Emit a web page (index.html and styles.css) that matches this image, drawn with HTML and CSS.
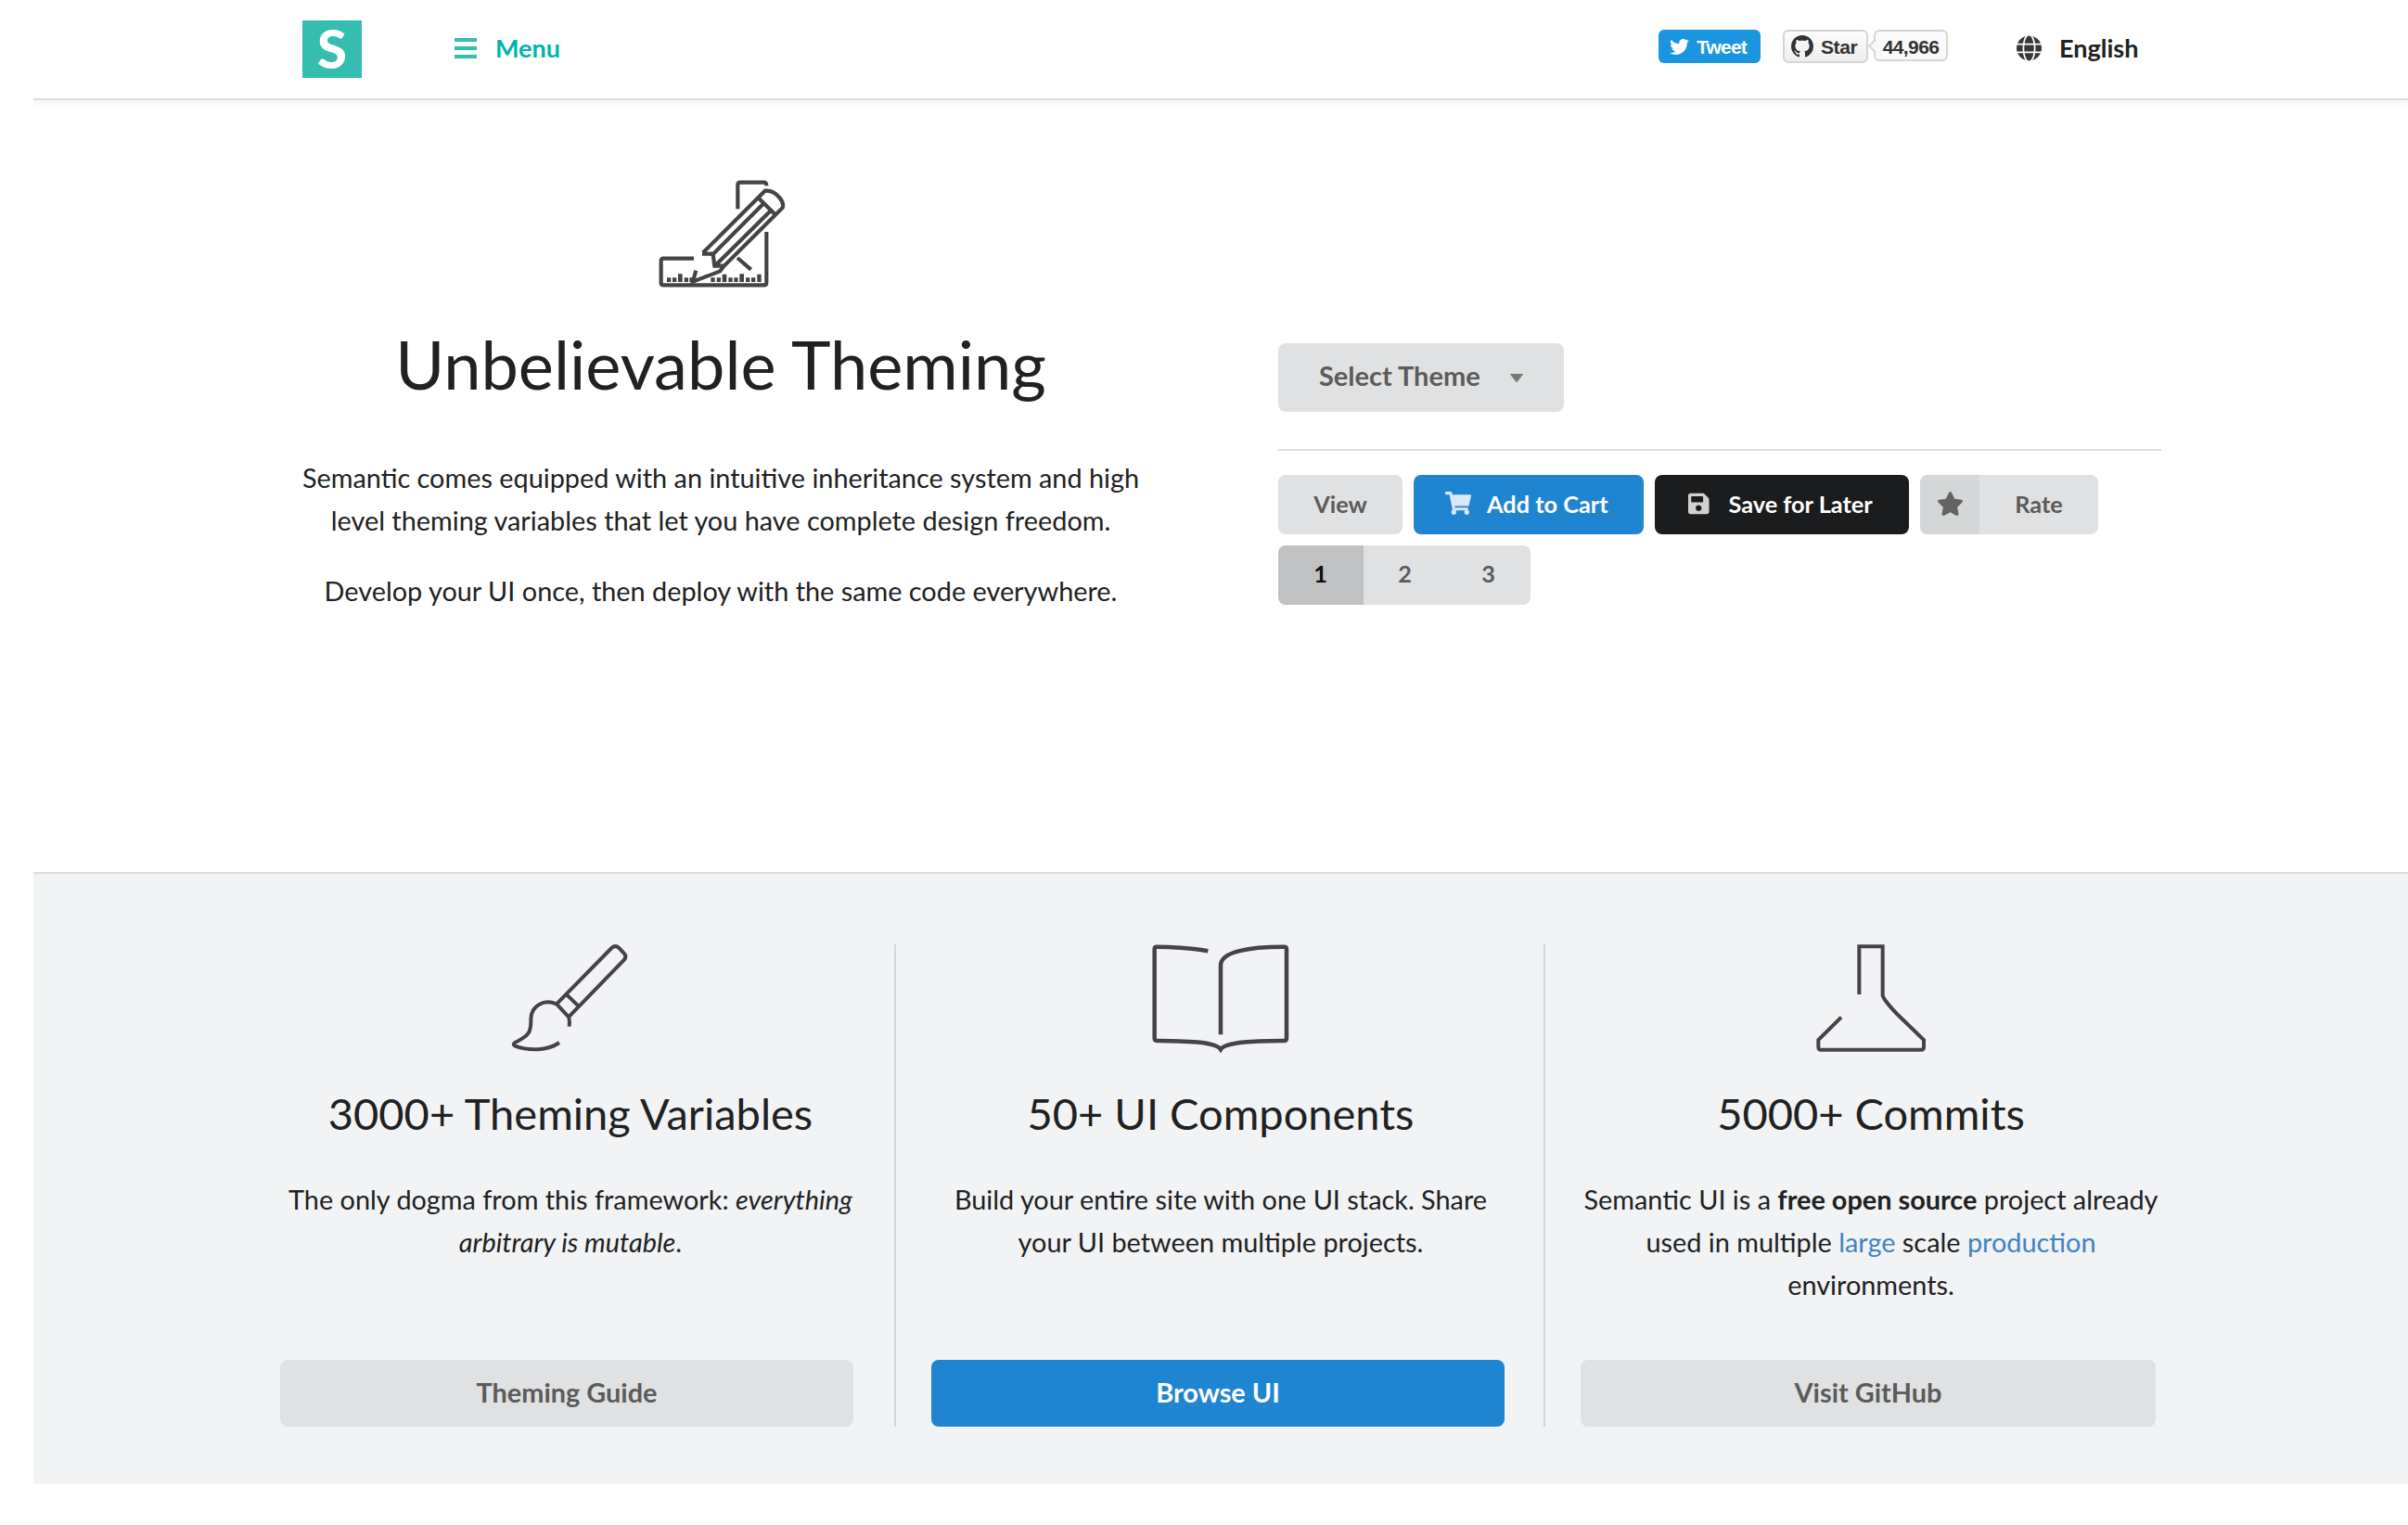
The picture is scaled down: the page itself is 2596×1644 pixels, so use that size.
FILE: index.html
```html
<!DOCTYPE html>
<html lang="en">
<head>
<meta charset="utf-8">
<title>Semantic UI</title>
<link rel="stylesheet" href="styles.css">
</head>
<body>
<header class="topbar">
  <a class="logo">S</a>
  <a class="menu-link">
    <svg class="bars" viewBox="0 0 24 22"><path d="M0 0h24v4H0zM0 9h24v4H0zM0 18h24v4H0z" fill="currentColor"/></svg>
    <span>Menu</span>
  </a>
  <div class="social">
    <a class="tweet">
      <svg viewBox="0 48 512 416" width="21" height="17"><path fill="#fff" d="M459.37 151.716c.325 4.548.325 9.097.325 13.645 0 138.72-105.583 298.558-298.558 298.558-59.452 0-114.68-17.219-161.137-47.106 8.447.974 16.568 1.299 25.34 1.299 49.055 0 94.213-16.568 130.274-44.832-46.132-.975-84.792-31.188-98.112-72.772 6.498.974 12.995 1.624 19.818 1.624 9.421 0 18.843-1.3 27.614-3.573-48.081-9.747-84.143-51.98-84.143-102.985v-1.299c13.969 7.797 30.214 12.67 47.431 13.319-28.264-18.843-46.781-51.005-46.781-87.391 0-19.492 5.197-37.36 14.294-52.954 51.655 63.675 129.3 105.258 216.365 109.807-1.624-7.797-2.599-15.918-2.599-24.04 0-57.828 46.782-104.934 104.934-104.934 30.213 0 57.502 12.67 76.67 33.137 23.715-4.548 46.456-13.32 66.599-25.34-7.798 24.366-24.366 44.833-46.132 57.827 21.117-2.273 41.584-8.122 60.426-16.243-14.292 20.791-32.161 39.308-52.628 54.253z"/></svg>
      <span>Tweet</span>
    </a>
    <a class="star">
      <svg viewBox="0 0 16 16" width="24" height="24"><path fill="#333" d="M8 0C3.58 0 0 3.58 0 8c0 3.54 2.29 6.53 5.47 7.59.4.07.55-.17.55-.38 0-.19-.01-.82-.01-1.49-2.01.37-2.53-.49-2.69-.94-.09-.23-.48-.94-.82-1.13-.28-.15-.68-.52-.01-.53.63-.01 1.08.58 1.23.82.72 1.21 1.87.87 2.33.66.07-.52.28-.87.51-1.07-1.78-.2-3.64-.89-3.64-3.95 0-.87.31-1.59.82-2.15-.08-.2-.36-1.02.08-2.12 0 0 .67-.21 2.2.82.64-.18 1.32-.27 2-.27.68 0 1.36.09 2 .27 1.53-1.04 2.2-.82 2.2-.82.44 1.1.16 1.92.08 2.12.51.56.82 1.27.82 2.15 0 3.07-1.87 3.75-3.65 3.95.29.25.54.73.54 1.48 0 1.07-.01 1.93-.01 2.2 0 .21.15.46.55.38A8.013 8.013 0 0 0 16 8c0-4.42-3.58-8-8-8z"/></svg>
      <span>Star</span>
    </a>
    <a class="count">44,966</a>
  </div>
  <a class="language">
    <svg viewBox="0 0 496 512" width="27" height="28"><path fill="currentColor" d="M336.5 160C322 70.7 287.8 8 248 8s-74 62.7-88.5 152h177zM152 256c0 22.2 1.2 43.5 3.3 64h185.3c2.1-20.5 3.3-41.8 3.3-64s-1.2-43.5-3.3-64H155.3c-2.1 20.5-3.3 41.8-3.3 64zm324.7-96c-28.6-67.9-86.5-120.4-158-141.6 24.4 33.8 41.2 84.7 50 141.6h108zM177.2 18.4C105.8 39.6 47.8 92.1 19.3 160h108c8.7-56.9 25.5-107.8 49.9-141.6zM487.4 192H372.7c2.1 21 3.3 42.5 3.3 64s-1.2 43-3.3 64h114.6c5.5-20.5 8.6-41.8 8.6-64s-3.1-43.5-8.5-64zM120 256c0-21.5 1.2-43 3.3-64H8.6C3.2 212.5 0 233.8 0 256s3.2 43.5 8.6 64h114.6c-2-21-3.2-42.5-3.2-64zm39.5 96c14.5 89.3 48.7 152 88.5 152s74-62.7 88.5-152h-177zm159.3 141.6c71.4-21.2 129.4-73.7 158-141.6h-108c-8.8 56.9-25.6 107.8-50 141.6zM19.3 352c28.6 67.9 86.5 120.4 158 141.6-24.4-33.8-41.2-84.7-50-141.6h-108z"/></svg>
    <span>English</span>
  </a>
</header>

<section class="hero">
  <div class="intro">
    <svg class="hero-icon" viewBox="-9 0 600 480" fill="none" stroke="#444446" stroke-width="12.500">
      <path d="M346 166V88q0-8 8-8h77q8 0 8 11M439 240v164q0 8-8 8H106q-8 0-8-8V334q0-8 8-8h98"/>
      <path d="M234 307L434 107q27-3 47 22q15 17 10 33L300 352L289 367L201 401L211 365M411 128L470 187M430 148L264 314M453 171L270 352M231 311H266L271 350H300M345 324L389 362"/>
      <path stroke="none" fill="#444446" d="M117 388h13v14h-13zM135 388h13v14h-13zM153 376h14v26h-14zM173 388h13v14h-13zM190 388h14v14h-14zM259 388h13v14h-13zM278 388h13v14h-13zM296 377h14v25h-14zM316 388h13v14h-13zM334 388h13v14h-13zM352 376h14v26h-14zM372 388h13v14h-13zM390 388h13v14h-13zM409 377h13v25h-13z"/>
    </svg>
    <h1>Unbelievable Theming</h1>
    <p>Semantic comes equipped with an intuitive inheritance system and high level theming variables that let you have complete design freedom.</p>
    <p>Develop your UI once, then deploy with the same code everywhere.</p>
  </div>
  <div class="demo">
    <button class="btn select">Select Theme<svg viewBox="0 0 14 9" width="14" height="9"><path d="M0 .5Q0 0 1 0h12q1 0 1 .5L8 8.200q-1 1-2 0z" fill="#767778"/></svg></button>
    <div class="rule"></div>
    <div class="row">
      <button class="btn view">View</button>
      <button class="btn blue cart"><svg viewBox="0 0 576 512" width="28" height="25"><path fill="#d9e8f6" d="M528.12 301.319l47.273-208C578.806 78.301 567.391 64 551.99 64H159.208l-9.166-44.81C147.758 8.021 137.93 0 126.529 0H24C10.745 0 0 10.745 0 24v16c0 13.255 10.745 24 24 24h69.883l70.248 343.435C147.325 417.1 136 435.222 136 456c0 30.928 25.072 56 56 56s56-25.072 56-56c0-15.674-6.447-29.835-16.824-40h209.647C430.447 426.165 424 440.326 424 456c0 30.928 25.072 56 56 56s56-25.072 56-56c0-22.172-12.888-41.332-31.579-50.405l5.517-24.276c3.413-15.018-8.002-29.319-23.403-29.319H218.117l-6.545-32h293.145c11.206 0 20.92-7.754 23.403-18.681z"/></svg><span>Add to Cart</span></button>
      <button class="btn black save"><svg viewBox="0 0 448 512" width="22.500" height="26"><path fill="#d1d1d2" d="M433.941 129.941l-83.882-83.882A48 48 0 0 0 316.118 32H48C21.49 32 0 53.49 0 80v352c0 26.51 21.49 48 48 48h352c26.51 0 48-21.49 48-48V163.882a48 48 0 0 0-14.059-33.941zM224 416c-35.346 0-64-28.654-64-64 0-35.346 28.654-64 64-64s64 28.654 64 64c0 35.346-28.654 64-64 64zm96-304.52V212c0 6.627-5.373 12-12 12H76c-6.627 0-12-5.373-12-12V108c0-6.627 5.373-12 12-12h228.520c3.183 0 6.235 1.264 8.485 3.515l3.480 3.480A11.996 11.996 0 0 1 320 111.480z"/></svg><span>Save for Later</span></button>
      <button class="btn rate"><span class="rate-icon"><svg viewBox="0 0 576 512" width="29" height="26"><path fill="#626363" d="M259.3 17.8L194 150.2 47.9 171.5c-26.2 3.8-36.7 36.1-17.7 54.6l105.7 103-25 145.5c-4.5 26.3 23.2 46 46.4 33.7L288 439.6l130.7 68.7c23.2 12.2 50.9-7.4 46.4-33.7l-25-145.5 105.7-103c19-18.5 8.5-50.8-17.7-54.6L382 150.2 316.7 17.8c-11.7-23.6-45.6-23.9-57.4 0z"/></svg></span><span class="rate-label">Rate</span></button>
    </div>
    <div class="pager">
      <button class="page active">1</button><button class="page">2</button><button class="page">3</button>
    </div>
  </div>
</section>

<section class="features">
  <article class="feature">
    <svg viewBox="-15 54 540 396" width="180" height="132" fill="none" stroke="#444446" stroke-width="12">
      <path d="M210 247L388 66q12-11 24 0l16 17q10 10 0 22L249 289zM240 214L281 254M210 247C170 230 126 252 127 298C128 340 120 350 74 373q-6 5 2 10C120 399 180 399 219 372M249 287q4 12 2 33"/>
    </svg>
    <h3>3000+ Theming Variables</h3>
    <p>The only dogma from this framework: <em>everything arbitrary is mutable</em>.</p>
    <button class="btn wide first">Theming Guide</button>
  </article>
  <div class="divider"></div>
  <article class="feature middle">
    <svg viewBox="3 54 570 396" width="190" height="132" fill="none" stroke="#444446" stroke-width="13.500">
      <path d="M247 76Q180 63 81 62.500q-7 0-7 7V358q0 8 8 8C160 367 270 367 288 394C306 367 420 367 494 366q7 0 7-8V70q0-7.500-7-7.500C380 62 288 78 288 122V346"/>
    </svg>
    <h3>50+ UI Components</h3>
    <p>Build your entire site with one UI stack. Share your UI between multiple projects.</p>
    <button class="btn blue wide">Browse UI</button>
  </article>
  <div class="divider"></div>
  <article class="feature">
    <svg viewBox="6 54 510 396" width="170" height="132" fill="none" stroke="#444446" stroke-width="12">
      <path d="M223 216V60.500H299V220Q304 236 345 279L432 363V386q0 9-9 9H100q-9 0-9-9V363L165 290"/>
    </svg>
    <h3>5000+ Commits</h3>
    <p>Semantic UI is a <b>free open source</b> project already used in multiple <a>large</a> scale <a>production</a> environments.</p>
    <button class="btn wide">Visit GitHub</button>
  </article>
</section>
</body>
</html>
```
FILE: styles.css
```css
* { box-sizing: border-box; }
body {
  margin: 0;
  background: #fff;
  color: #212121;
  font: 28.85px/46px Lato, sans-serif;
}
svg { display: block; flex: none; }
h1, h3, p { margin: 0; font-weight: 400; }

.topbar {
  display: flex;
  align-items: center;
  height: 108px;
  margin-left: 36px;
  padding-left: 290px;
  border-bottom: 2px solid #dcdcdd;
  box-shadow: 0 2px 8px rgba(0, 0, 0, .06);
  clip-path: inset(0 0 -12px 0);
  font-size: 27px;
  font-weight: 700;
  white-space: nowrap;
}
.logo {
  width: 64px;
  height: 62px;
  background: #35bdb2;
  color: #fff;
  font-size: 58px;
  font-weight: 900;
  line-height: 60px;
  text-align: center;
}
.menu-link {
  display: flex;
  align-items: center;
  gap: 20px;
  margin: 0 0 3px 100px;
  width: 1298px;
  color: #00b5ad;
}
.bars { width: 24px; height: 22px; margin-top: 1px; color: #35bdb2; }
.social {
  display: flex;
  align-items: flex-start;
  height: 36px;
  margin-bottom: 6px;
  font: 700 21px/37px "Liberation Sans", Arial, sans-serif;
}
.tweet, .star { display: flex; align-items: center; height: 36px; }
.tweet {
  width: 110px;
  gap: 8px;
  padding-left: 12px;
  border-radius: 6px;
  background: #1b95e0;
  color: #fff;
  letter-spacing: -.8px;
}
.star {
  width: 92px;
  gap: 8px;
  margin-left: 24px;
  padding-left: 7px;
  border: 2px solid #d5d5d5;
  border-radius: 6px;
  background: linear-gradient(#fcfcfc, #eee);
  color: #333;
  letter-spacing: -.4px;
}
.count {
  position: relative;
  width: 80px;
  height: 34px;
  margin-left: 6px;
  border: 2px solid #d5d5d5;
  border-radius: 6px;
  background: #fafafa;
  color: #333;
  letter-spacing: -.6px;
  line-height: 34px;
  text-align: center;
}
.count::before {
  content: "";
  position: absolute;
  left: -6px;
  top: 10px;
  width: 9px;
  height: 9px;
  border: solid #d5d5d5;
  border-width: 0 0 2px 2px;
  background: #fafafa;
  transform: rotate(45deg);
}
.language {
  display: flex;
  align-items: center;
  gap: 19px;
  margin: 0 0 3px 74px;
}
.language svg { color: #383838; }

.hero { display: flex; height: 832px; padding: 62px 0 0 302px; }
.intro { width: 950px; text-align: center; }
.hero-icon { width: 200px; height: 160px; margin: 0 auto; }
h1 { margin: 16px 0 54px; font-size: 72.2px; line-height: 92px; }
.intro p + p { margin-top: 30px; }

.demo { width: 952px; margin: 200px 0 0 126px; }
.btn {
  display: flex;
  align-items: center;
  height: 64px;
  padding: 0 0 3px;
  border: 0;
  border-radius: 8px;
  background: #e0e1e2;
  color: #5b5b5b;
  font: 700 25.3px/26px Lato, sans-serif;
  white-space: nowrap;
}
.btn.select { width: 308px; height: 74px; padding: 0 44px 4px; font-size: 29px; justify-content: space-between; }
.select svg { margin-top: 5px; }
.btn.blue { background: #2085d0; color: #fff; }
.btn.black { background: #1b1c1d; color: #fff; }
.rule { height: 2px; margin: 40px 0 26px; background: #dededf; }
.row { display: flex; gap: 12px; }
.btn.view { width: 134px; justify-content: center; }
.btn.cart { width: 248px; padding-left: 34px; gap: 17px; }
.btn.save { width: 274px; padding-left: 36px; gap: 21px; }
.save svg { margin-top: 1px; }
.btn.rate { width: 192px; padding: 0; overflow: hidden; }
.rate-icon {
  display: flex;
  align-items: center;
  justify-content: center;
  width: 64px;
  height: 64px;
  background: #d5d6d8;
}
.rate-icon svg { margin-bottom: 3px; }
.rate-label { flex: 1; padding-bottom: 3px; text-align: center; }
.pager { display: flex; width: 272px; margin-top: 12px; border-radius: 8px; overflow: hidden; }
.page {
  flex: 1;
  height: 64px;
  padding: 0 1px 4px 0;
  border: 0;
  background: #e0e1e2;
  color: #5b5b5b;
  font: 700 25.3px/26px Lato, sans-serif;
}
.page.active { flex: 0 0 92px; background: #c0c1c2; color: #0d0d0d; }

.features {
  display: flex;
  height: 660px;
  margin-left: 36px;
  padding: 76px 0 62px 266px;
  border-top: 2px solid #dcddde;
  background: #f1f3f5;
}
.feature { display: flex; flex-direction: column; align-items: center; width: 626px; text-align: center; }
.feature.middle { width: 624px; }
.feature p { padding: 0 1px; }
.middle p { padding: 0 12px; }
.divider { width: 2px; margin: 0 38px 0 36px; background: #d4d6d8; }
h3 { margin: 20px 0 40px; font-size: 47px; line-height: 60px; }
.feature a { color: #4183c4; }
.btn.wide { align-self: stretch; justify-content: center; height: 72px; margin: auto 6px 0 0; padding-bottom: 3px; font-size: 28.9px; }
.btn.wide.first { margin-right: 8px; }
```
